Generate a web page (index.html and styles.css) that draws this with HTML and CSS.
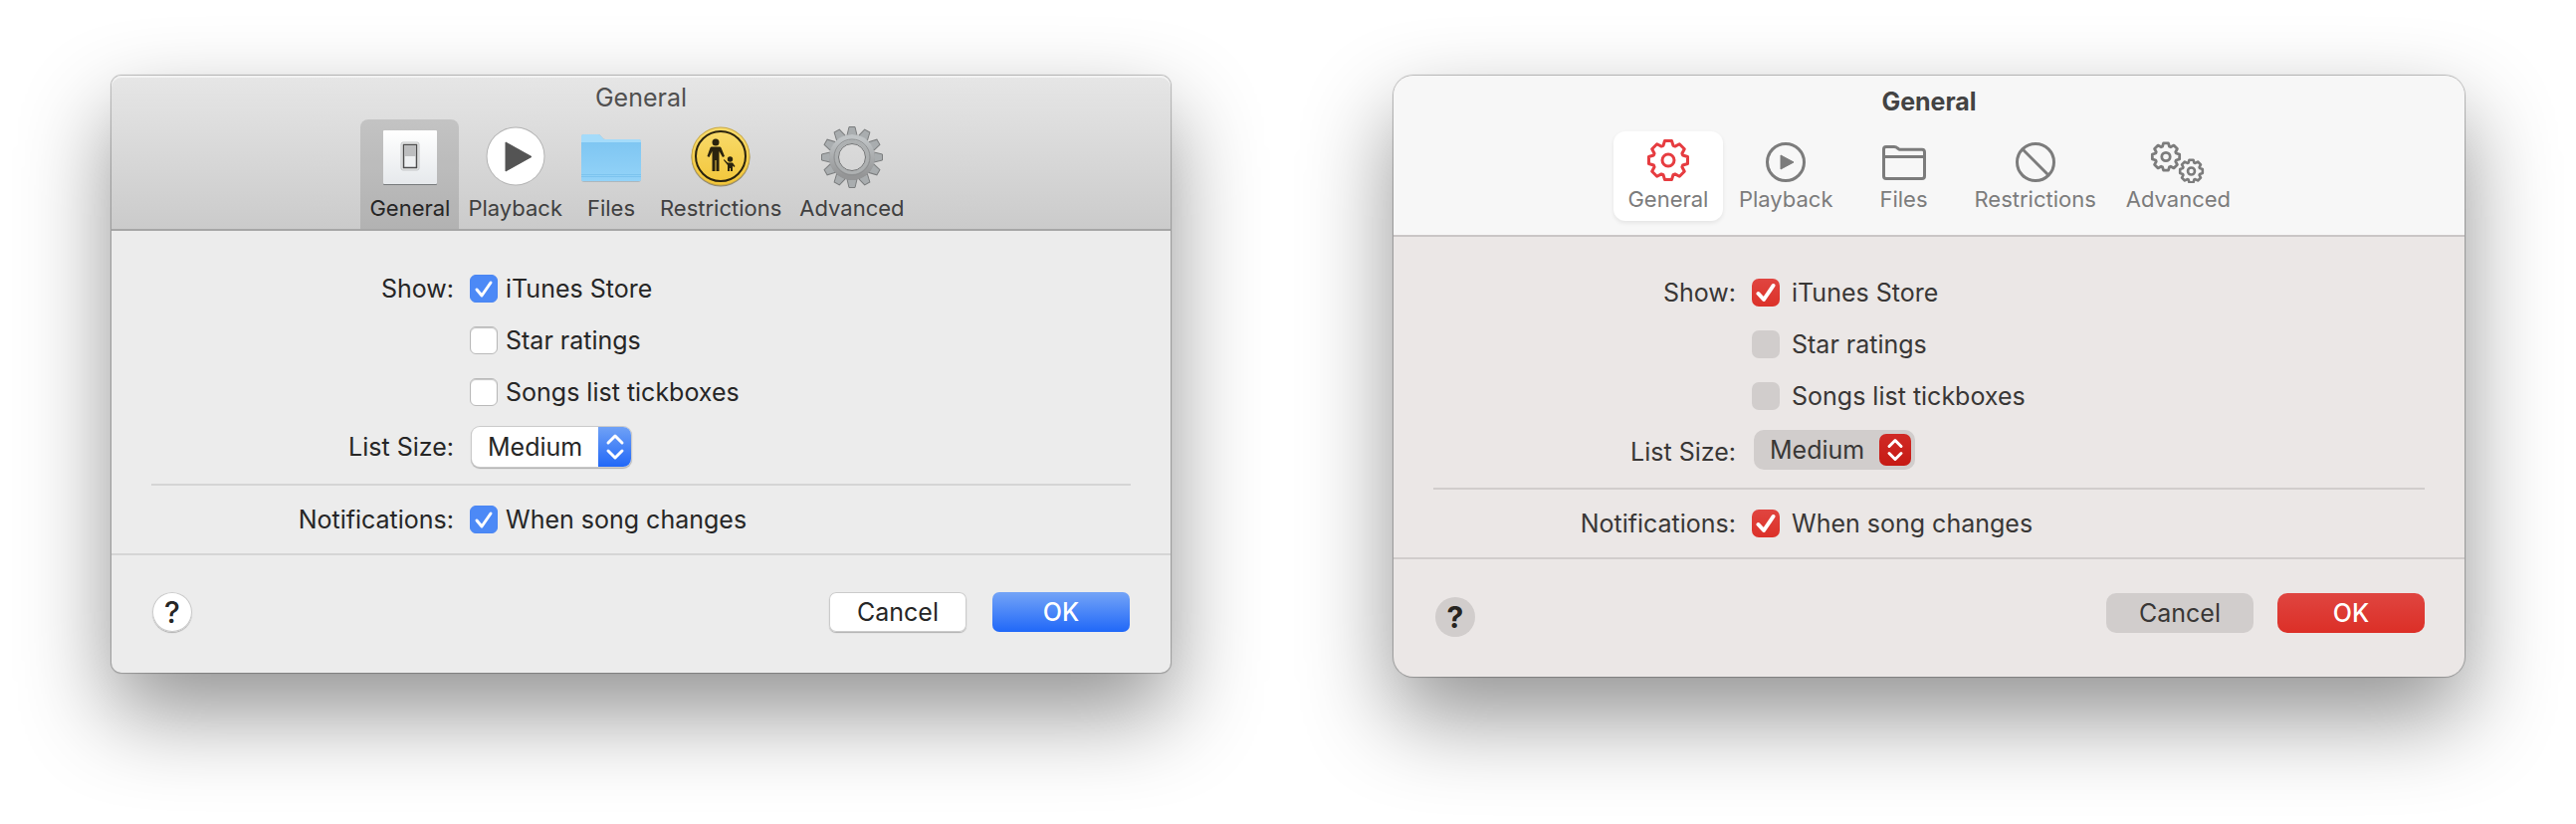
FILE: index.html
```html
<!DOCTYPE html>
<html lang="en">
<head>
    <meta charset="UTF-8">
    <meta name="viewport" content="width=device-width, initial-scale=1.0">
    <title>General</title>
    <link rel="stylesheet" href="styles.css">
</head>
<body>
    <!-- Shared shapes -->
    <svg class="defs" width="0" height="0" aria-hidden="true">
        <defs>
            <g id="cog">
                <path d="M-5-14.6L-3.5-19.5H3.5L5-14.6L6.8-13.9L11.3-16.3L16.3-11.3L13.9-6.8L14.6-5L19.5-3.5V3.5L14.6 5L13.9 6.8L16.3 11.3L11.3 16.3L6.8 13.9L5 14.6L3.5 19.5H-3.5L-5 14.6L-6.8 13.9L-11.3 16.3L-16.3 11.3L-13.9 6.8L-14.6 5L-19.5 3.5V-3.5L-14.6-5L-13.9-6.8L-16.3-11.3L-11.3-16.3L-6.8-13.9Z"/>
                <circle r="6"/>
            </g>
            <path id="tooth" d="M-5-22L-3-30.5H3L5-22Z"/>
            <linearGradient id="metal" x1="0" y1="0" x2="0" y2="1">
                <stop offset="0" stop-color="#c0c4c6"/>
                <stop offset="1" stop-color="#949596"/>
            </linearGradient>
            <linearGradient id="plate" x1="0" y1="0" x2="0" y2="1">
                <stop offset="0" stop-color="#ffffff"/>
                <stop offset="1" stop-color="#e6e9ec"/>
            </linearGradient>
            <linearGradient id="folder" x1="0" y1="0" x2="0" y2="1">
                <stop offset="0" stop-color="#7fc6f2"/>
                <stop offset="1" stop-color="#93d3f8"/>
            </linearGradient>
            <linearGradient id="sign" x1="0" y1="0" x2="0" y2="1">
                <stop offset="0" stop-color="#f8db6c"/>
                <stop offset="1" stop-color="#f3c63a"/>
            </linearGradient>
        </defs>
    </svg>

    <main class="windows">
        <section class="window classic">
            <header>
                <h1>General</h1>
                <nav class="toolbar">
                    <button class="tab active" type="button">
                        <svg class="icon" width="62" height="62" viewBox="0 0 62 62" aria-hidden="true">
                            <rect x="4" y="5" width="54" height="54" rx="1" fill="#777a7c"/>
                            <rect x="4" y="4" width="54" height="54" rx="1" fill="url(#plate)"/>
                            <rect x="22" y="16" width="18" height="28" rx="2" fill="#eceeee" stroke="#c4c6c7"/>
                            <rect x="24.500" y="18.500" width="13" height="23" fill="#eef0f1" stroke="#4d4d4d" stroke-width="1.500"/>
                            <rect x="25" y="19" width="12" height="11" fill="#bdbebf"/>
                        </svg>
                        <span>General</span>
                    </button>
                    <button class="tab" type="button">
                        <svg class="icon" width="62" height="62" viewBox="0 0 62 62" aria-hidden="true">
                            <circle cx="31" cy="30" r="29.500" fill="#b3b3b3"/>
                            <circle cx="31" cy="30" r="28.500" fill="#fff"/>
                            <path d="M21 16L47 30.500L21 45Z" fill="#545454" stroke="#545454" stroke-linejoin="round"/>
                        </svg>
                        <span>Playback</span>
                    </button>
                    <button class="tab" type="button">
                        <svg class="icon" width="62" height="62" viewBox="0 0 62 62" aria-hidden="true">
                            <path d="M1 11Q1 8 4 8H18Q20 8 21 10L22 11Q23 13 25 13H58Q61 13 61 16V53Q61 56 58 56H4Q1 56 1 53Z" fill="#8a9aa4" opacity=".5"/>
                            <path d="M1 10Q1 8 3 8H18Q20 8 21 10L22 11Q23 13 25 13H59Q61 13 61 15V53Q61 55 59 55H3Q1 55 1 53Z" fill="#a4dbfa"/>
                            <path d="M1 16H61V53Q61 55 59 55H3Q1 55 1 53Z" fill="url(#folder)"/>
                            <path d="M1 48.500H61M1 50.500H61" stroke="#7cc3ee" stroke-width="1"/>
                        </svg>
                        <span>Files</span>
                    </button>
                    <button class="tab" type="button">
                        <svg class="icon" width="62" height="62" viewBox="0 0 62 62" aria-hidden="true">
                            <circle cx="31" cy="31" r="29.500" fill="#8c8676"/>
                            <circle cx="31" cy="30" r="29.500" fill="#c9a945"/>
                            <circle cx="31" cy="30" r="28.500" fill="url(#sign)"/>
                            <circle cx="31" cy="30" r="25" fill="none" stroke="#2a230e" stroke-width="2"/>
                            <g fill="#2a230e">
                                <circle cx="26" cy="16" r="3.500"/>
                                <path d="M22 20.500H30Q31 20.500 31.500 21.500L35 30L33 31L29.500 25V45H26.500V34H25.500V45H22.500V25L19.500 31L17.500 30L20.500 21.500Q21 20.500 22 20.500Z"/>
                                <circle cx="40.500" cy="33" r="2.700"/>
                                <path d="M34.500 33L38 36.500H43L45.500 40L44.500 41L43 39.500V45H41V42H40V45H38V39L34 34Z"/>
                            </g>
                        </svg>
                        <span>Restrictions</span>
                    </button>
                    <button class="tab" type="button">
                        <svg class="icon" width="62" height="62" viewBox="-31 -31 62 62" aria-hidden="true">
                            <g fill="#a9adaf" stroke="#7b7d7e" stroke-width="1">
                                <use href="#tooth"/>
                                <use href="#tooth" transform="rotate(30)"/>
                                <use href="#tooth" transform="rotate(60)"/>
                                <use href="#tooth" transform="rotate(90)"/>
                                <use href="#tooth" transform="rotate(120)"/>
                                <use href="#tooth" transform="rotate(150)"/>
                                <use href="#tooth" transform="rotate(180)"/>
                                <use href="#tooth" transform="rotate(210)"/>
                                <use href="#tooth" transform="rotate(240)"/>
                                <use href="#tooth" transform="rotate(270)"/>
                                <use href="#tooth" transform="rotate(300)"/>
                                <use href="#tooth" transform="rotate(330)"/>
                            </g>
                            <circle r="18.500" fill="none" stroke="url(#metal)" stroke-width="9"/>
                            <circle r="18" fill="none" stroke="#8d8f90" stroke-width="1"/>
                            <circle r="15.500" fill="none" stroke="#adb0b1" stroke-width="3"/>
                            <circle r="13.500" fill="none" stroke="#707273" stroke-width="1"/>
                        </svg>
                        <span>Advanced</span>
                    </button>
                </nav>
            </header>

            <form>
                <div class="settings">
                    <div class="row">
                        <span class="name">Show:</span>
                        <label class="check">
                            <span class="box">
                                <input type="checkbox" checked>
                                <svg width="28" height="28" viewBox="0 0 28 28" aria-hidden="true"><path d="M7 15L12 21L21 8"/></svg>
                            </span>
                            iTunes Store
                        </label>
                    </div>
                    <div class="row">
                        <label class="check">
                            <span class="box"><input type="checkbox"></span>
                            Star ratings
                        </label>
                    </div>
                    <div class="row">
                        <label class="check">
                            <span class="box"><input type="checkbox"></span>
                            Songs list tickboxes
                        </label>
                    </div>
                    <div class="row row-select">
                        <label class="name" for="size-classic">List Size:</label>
                        <div class="select">
                            <select id="size-classic">
                                <option>Small</option>
                                <option selected>Medium</option>
                                <option>Large</option>
                            </select>
                            <svg class="arrows" width="33" height="40" viewBox="0 0 33 40" aria-hidden="true"><path d="M10 16L17 9L24 16M10 24L17 31L24 24"/></svg>
                        </div>
                    </div>
                    <hr>
                    <div class="row">
                        <span class="name">Notifications:</span>
                        <label class="check">
                            <span class="box">
                                <input type="checkbox" checked>
                                <svg width="28" height="28" viewBox="0 0 28 28" aria-hidden="true"><path d="M7 15L12 21L21 8"/></svg>
                            </span>
                            When song changes
                        </label>
                    </div>
                </div>
                <footer>
                    <button class="help" type="button" aria-label="Help">?</button>
                    <button class="btn btn-cancel" type="button">Cancel</button>
                    <button class="btn btn-ok" type="button">OK</button>
                </footer>
            </form>
        </section>

        <section class="window modern">
            <header>
                <h1>General</h1>
                <nav class="toolbar">
                    <button class="tab active" type="button">
                        <svg class="icon" width="44" height="44" viewBox="-22 -21 44 44" aria-hidden="true">
                            <use href="#cog"/>
                        </svg>
                        <span>General</span>
                    </button>
                    <button class="tab" type="button">
                        <svg class="icon" width="44" height="44" viewBox="0 0 44 44" aria-hidden="true">
                            <circle cx="22" cy="23" r="18.500"/>
                            <path class="solid" d="M17 16L30 23L17 30Z"/>
                        </svg>
                        <span>Playback</span>
                    </button>
                    <button class="tab" type="button">
                        <svg class="icon" width="44" height="44" viewBox="0 0 44 44" aria-hidden="true">
                            <path d="M1.500 10Q1.500 7.500 4 7.500H12Q14 7.500 15.500 9L17 10.200H40Q42.500 10.200 42.500 13V37Q42.500 39.500 40 39.500H4Q1.500 39.500 1.500 37ZM1.500 17.500H42.500"/>
                        </svg>
                        <span>Files</span>
                    </button>
                    <button class="tab" type="button">
                        <svg class="icon" width="44" height="44" viewBox="0 0 44 44" aria-hidden="true">
                            <circle cx="22" cy="23" r="18.500"/>
                            <path d="M9 10L35 36"/>
                        </svg>
                        <span>Restrictions</span>
                    </button>
                    <button class="tab" type="button">
                        <svg class="icon" width="56" height="44" viewBox="0 0 56 44" aria-hidden="true">
                            <use href="#cog" transform="translate(16 17.500) scale(.7)" stroke-width="4"/>
                            <use href="#cog" transform="translate(41.500 32) scale(.58)" stroke-width="4.500"/>
                        </svg>
                        <span>Advanced</span>
                    </button>
                </nav>
            </header>

            <form>
                <div class="settings">
                    <div class="row">
                        <span class="name">Show:</span>
                        <label class="check">
                            <span class="box">
                                <input type="checkbox" checked>
                                <svg width="28" height="28" viewBox="0 0 28 28" aria-hidden="true"><path d="M6.500 15L12 21L21.500 7"/></svg>
                            </span>
                            iTunes Store
                        </label>
                    </div>
                    <div class="row">
                        <label class="check">
                            <span class="box"><input type="checkbox"></span>
                            Star ratings
                        </label>
                    </div>
                    <div class="row">
                        <label class="check">
                            <span class="box"><input type="checkbox"></span>
                            Songs list tickboxes
                        </label>
                    </div>
                    <div class="row row-select">
                        <label class="name" for="size-modern">List Size:</label>
                        <div class="select">
                            <select id="size-modern">
                                <option>Small</option>
                                <option selected>Medium</option>
                                <option>Large</option>
                            </select>
                            <svg class="arrows" width="32" height="32" viewBox="0 0 32 32" aria-hidden="true"><path d="M10 12.500L16 6.500L22 12.500M10 19.500L16 25.500L22 19.500"/></svg>
                        </div>
                    </div>
                    <hr>
                    <div class="row">
                        <span class="name">Notifications:</span>
                        <label class="check">
                            <span class="box">
                                <input type="checkbox" checked>
                                <svg width="28" height="28" viewBox="0 0 28 28" aria-hidden="true"><path d="M6.500 15L12 21L21.500 7"/></svg>
                            </span>
                            When song changes
                        </label>
                    </div>
                </div>
                <footer>
                    <button class="help" type="button" aria-label="Help">?</button>
                    <button class="btn btn-cancel" type="button">Cancel</button>
                    <button class="btn btn-ok" type="button">OK</button>
                </footer>
            </form>
        </section>
    </main>
</body>
</html>
```

FILE: styles.css
```css
* {
    margin: 0;
    padding: 0;
    box-sizing: border-box;
}

body {
    font-family: Inter, 'Liberation Sans', sans-serif;
    font-size: 25px;
    line-height: 32px;
    background-color: #fff;
}

button,
select {
    font: inherit;
    color: inherit;
    border: none;
    cursor: pointer;
}

.defs {
    position: absolute;
}

.windows {
    display: grid;
    grid-template-columns: 266fr 269fr;
    gap: 224px;
    align-items: start;
    padding: 76px 112px 148px;
}

.window {
    box-shadow: 0 0 1px 1px rgba(0, 0, 0, 0.25), 0 40px 90px rgba(0, 0, 0, 0.43);
}

h1 {
    font-size: 25px;
    font-weight: 400;
    text-align: center;
}

/* Toolbar */
.toolbar {
    display: flex;
    justify-content: center;
}

.tab {
    display: flex;
    flex-direction: column;
    align-items: center;
    background: none;
    font-size: 22px;
}

.icon {
    display: block;
}

/* Settings */
.settings {
    padding-left: 40px;
    padding-right: 40px;
    padding-bottom: 8px;
}

.row {
    display: grid;
    grid-template-columns: 304px 1fr;
    column-gap: 16px;
    align-items: center;
    min-height: 52px;
}

.name {
    text-align: right;
}

.check {
    grid-column: 2;
    justify-self: start;
    display: flex;
    align-items: center;
}

.box {
    display: grid;
}

.box input,
.box svg {
    grid-area: 1 / 1;
    width: 28px;
    height: 28px;
}

.box input {
    appearance: none;
}

.box svg {
    pointer-events: none;
    fill: none;
    stroke: #fff;
    stroke-linecap: round;
    stroke-linejoin: round;
}

.select {
    display: grid;
    align-items: center;
    justify-self: start;
    margin-left: 2px;
}

.select select,
.arrows {
    grid-area: 1 / 1;
}

.select select {
    appearance: none;
    height: 40px;
}

.arrows {
    justify-self: end;
    pointer-events: none;
    fill: none;
    stroke: #fff;
    stroke-width: 3;
    stroke-linecap: round;
    stroke-linejoin: round;
}

hr {
    border: none;
    height: 2px;
    margin-bottom: 8px;
}

/* Footer */
footer {
    display: flex;
    align-items: flex-start;
}

.help {
    width: 40px;
    height: 40px;
    margin-right: auto;
    border-radius: 50%;
    font-size: 30px;
    font-weight: 500;
}

.btn {
    height: 40px;
}

.btn-ok {
    color: #fff;
    font-weight: 500;
}

/* Classic window */
.classic {
    border-radius: 10px;
    background-color: #ececec;
    color: #262626;
}

.classic header {
    padding-top: 6px;
    border-bottom: 2px solid #a6a6a6;
    border-radius: 10px 10px 0 0;
    background: linear-gradient(#e6e6e6, #cbcbcb);
    box-shadow: inset 0 2px 0 #f3f3f3;
}

.classic h1 {
    margin-bottom: 6px;
    color: #505050;
}

.classic .toolbar {
    padding-right: 8px;
}

.classic .tab {
    padding: 7px 9px;
    border-radius: 8px 8px 0 0;
    line-height: 28px;
    color: #404040;
}

.classic .tab.active {
    background-color: rgba(0, 0, 0, 0.12);
    color: #262626;
}

.classic .icon {
    margin-bottom: 6px;
}

.classic .settings {
    padding-top: 32px;
}

.classic .check {
    gap: 8px;
}

.classic .box input {
    border: 1px solid #b9b9b9;
    border-radius: 6px;
    background-color: #fff;
    box-shadow: inset 0 1px 1px #c4c4c4;
}

.classic .box input:checked {
    border-color: #4a86f3;
    background-color: #4c89f6;
    box-shadow: none;
}

.classic .box svg {
    stroke-width: 3;
}

.classic .row-select {
    min-height: 58px;
}

.classic select {
    width: 160px;
    padding-left: 16px;
    border-radius: 8px;
    background-color: #fff;
    box-shadow: 0 0 0 1px #cbcbcb, 0 1px 1px 1px #b0b0b0;
}

.classic .arrows {
    border-radius: 0 8px 8px 0;
    background: linear-gradient(#6fa1f6, #2268f7);
}

.classic hr {
    margin-top: 8px;
    background-color: #d5d5d5;
}

.classic footer {
    gap: 26px;
    padding: 37px 41px 41px;
    border-top: 2px solid #d5d5d5;
}

.classic .help,
.classic .btn-cancel {
    background-color: #fff;
    box-shadow: inset 0 0 0 1px #cbcbcb, 0 1px 1px #b0b0b0;
}

.classic .btn {
    width: 138px;
    border-radius: 7px;
}

.classic .btn-ok {
    background: linear-gradient(#74a4f7, #2068f8);
}

/* Modern window */
.modern {
    border-radius: 20px;
    background-color: #ebe7e6;
    color: #393736;
}

.modern header {
    padding-top: 10px;
    padding-bottom: 14px;
    border-bottom: 2px solid #cac6c6;
    border-radius: 20px 20px 0 0;
    background-color: #f7f7f7;
}

.modern h1 {
    margin-bottom: 14px;
    font-weight: 700;
    color: #434343;
}

.modern .toolbar {
    gap: 2px;
}

.modern .tab {
    min-width: 110px;
    padding: 8px 14px 10px;
    border-radius: 12px;
    line-height: 24px;
    color: #7c7c7c;
}

.modern .tab.active {
    background-color: #fff;
    box-shadow: 0 2px 4px rgba(0, 0, 0, 0.08);
}

.modern .icon {
    margin-bottom: 4px;
    fill: none;
    stroke: #7c7c7c;
    stroke-width: 3;
    stroke-linejoin: round;
}

.modern .icon .solid {
    fill: #7c7c7c;
    stroke-width: 1;
}

.modern .active .icon {
    stroke: #e63c40;
}

.modern .settings {
    padding-top: 30px;
}

.modern .check {
    gap: 12px;
}

.modern .box input {
    border-radius: 7px;
    background-color: #d1cdcc;
}

.modern .box input:checked {
    background: linear-gradient(#e04540, #dc3129);
}

.modern .box svg {
    stroke-width: 4;
}

.modern .row-select {
    min-height: 56px;
}

.modern .row-select .name {
    padding-top: 4px;
}

.modern select {
    width: 162px;
    padding-left: 16px;
    border-radius: 10px;
    background-color: #d1cdcc;
}

.modern .arrows {
    margin-right: 4px;
    border-radius: 7px;
    background: linear-gradient(#d02a25, #c61a14);
}

.modern hr {
    margin-top: 10px;
    background-color: #d1cdcc;
}

.modern footer {
    gap: 24px;
    padding: 34px 40px 40px;
    border-top: 2px solid #d1cdcc;
}

.modern .help {
    margin-top: 4px;
    margin-left: 2px;
    background-color: #d1cdcc;
    color: #262420;
    font-weight: 700;
}

.modern .btn {
    width: 148px;
    border-radius: 10px;
}

.modern .btn-cancel {
    background-color: #d1cdcc;
}

.modern .btn-ok {
    background: linear-gradient(#df4540, #dc2f27);
}
```
